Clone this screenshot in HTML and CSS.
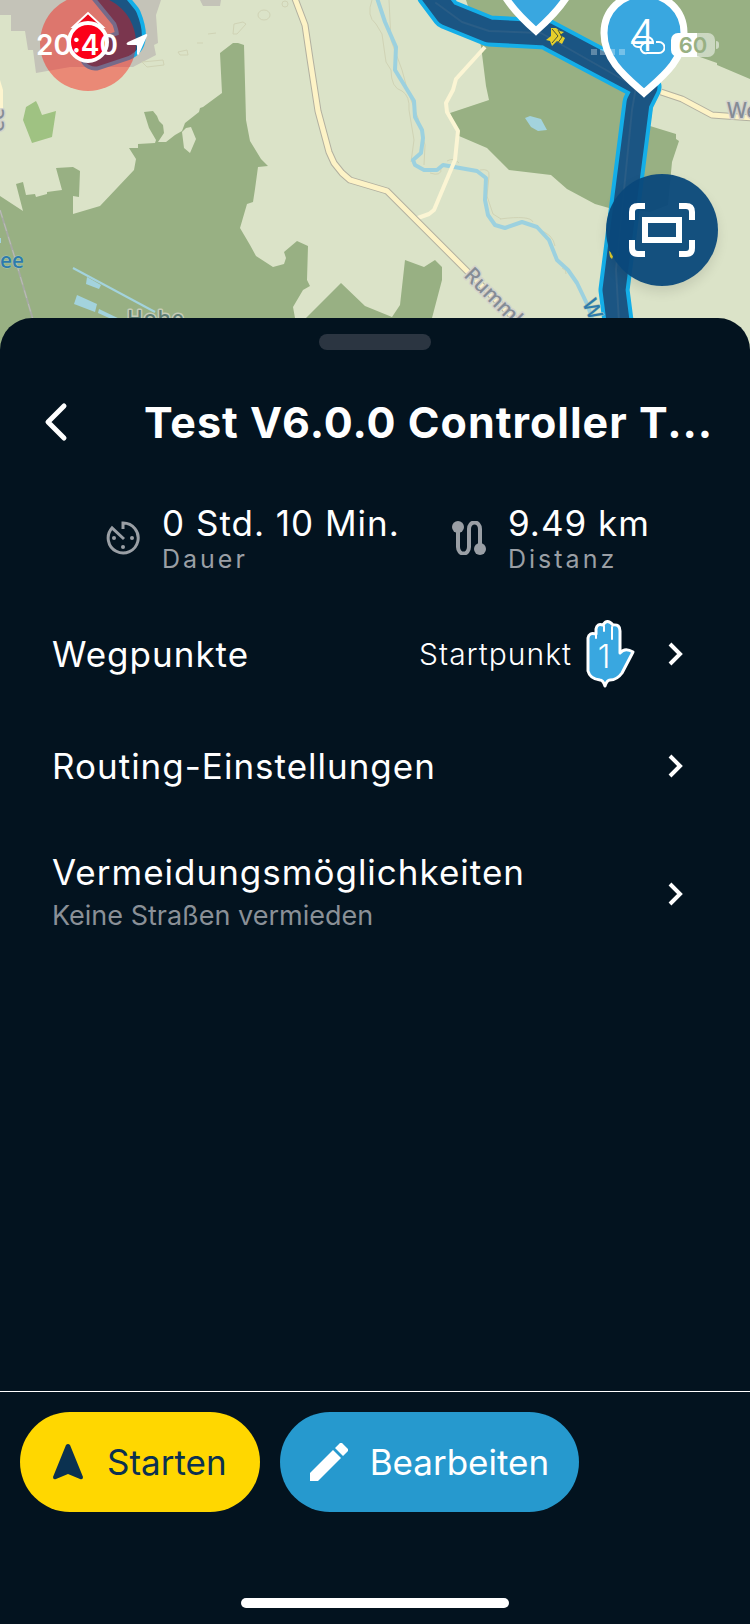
FILE: index.html
```html
<!DOCTYPE html>
<html lang="de">
<head>
    <meta charset="UTF-8">
    <meta name="viewport" content="width=device-width, initial-scale=1.0">
    <title>Test V6.0.0 Controller T...</title>
    <link rel="stylesheet" href="styles.css">
</head>
<body>

    <div class="map">
        <svg class="map-canvas" viewBox="0 0 750 352" preserveAspectRatio="xMidYMin slice" aria-hidden="true">
            <!-- Ort und Wald -->
            <path fill="#c4c3b8" d="M0 0V15H11V31H25L28 50H33L36 73L70 67H133L156 55L154 45L158 43L156 15L161 0ZM200 0L203 6H220L221 0Z"/>
            <path fill="#9fc282" d="M26 107L36 101L38 105L42 115L56 111L52 137L32 143L23 120Z"/>
            <path fill="#98b083" fill-rule="evenodd" d="M0 196L23 211L16 184L23 182L26 195L35 194L36 197L47 194V192L62 190L56 168L73 167L80 171L79 197L73 196V214L100 206L134 170L136 159L129 148H138V144L155 143L156 140L149 128L144 112L153 111L157 116L159 121L163 125L164 133L158 142H166L175 135L182 131L185 123L199 112L200 108L203 107L222 93L220 53L233 43H238L244 45L246 120L250 141L261 159L268 166L258 167L255 189L253 202L247 204L240 228L250 245L256 256L273 267L284 264L286 258L284 252L297 241L308 246L307 280L310 286L303 290L293 307L295 318H306L341 283L365 306L392 317L400 305L405 260L424 267L435 260L442 267V280L432 318V352H0ZM186 128L191 127L196 139L190 153L184 148L182 132Z"/>
            <path fill="#98b083" d="M466 0H750V79L717 65V63L700 57L662 42L650 126L676 134V139L679 141L672 162L668 205L650 212L609 208L595 204L567 189L551 175L509 170L500 161L487 148L459 136L450 113L489 100L486 86L481 46Z"/>
            <!-- Höhenlinien -->
            <g fill="none" stroke="#d0d3b5" stroke-width="1">
                <path d="M372 0Q366 16 376 24L382 34L386 62L391 70Q391 88 402 91Q410 96 409 110L414 140L411 162M389 0L391 40L402 70L408 92L418 118L425 145L424 165M430 173Q442 177 441 168M447 161Q454 157 459 163M480 170Q490 168 489 176L487 196L493 214L501 219M500 219Q530 215 533 222M539 230Q553 234 555 246M562 268Q567 270 566 274"/>
                <ellipse cx="264" cy="15" rx="6" ry="5"/><circle cx="285" cy="4" r="3"/>
                <path d="M142 62L163 60L164 65L147 67ZM178 52L187 50L188 55L180 55ZM197 43L203 43M208 34L216 33M234 24L243 22L246 24L237 34L233 34Z"/>
            </g>
            <!-- Gewässer -->
            <path fill="#a3d3dd" d="M87 277L101 285L99 289L86 284ZM77 295L97 304L95 312L74 304ZM99 309L124 321L118 322L98 313ZM525 118L530 116L541 119L547 130L538 131L531 127ZM0 238L1 238V243H0Z"/>
            <path fill="none" stroke="#a3d3dd" stroke-width="2" d="M73 268L155 312"/>
            <path fill="none" stroke="#9cd1df" stroke-width="4" stroke-linejoin="round" d="M377 -2L385 22L396 47L395 70L414 101L415 117L422 130L423 138L421 153L413 160L415 165L424 170H437L443 165L477 171L486 178L485 200L488 215L495 225L505 228L522 222L537 227L549 240L557 260L568 270L577 283L588 306L593 322"/>
            <!-- Straßen und Bahn -->
            <path fill="none" stroke="#a6aaa3" stroke-width="2" d="M0 210L14 255L36 330"/>
            <path fill="none" stroke="#bbbeb5" stroke-width="1" stroke-dasharray="8 6" d="M0 210L14 255L36 330"/>
            <path fill="#fdf5cf" d="M0 80L3 90V108L0 111Z"/>
            <path fill="none" stroke="#fbf5d4" stroke-width="4" stroke-linejoin="round" d="M485 47L456 79L453 90L446 103L447 112L458 131L455 160L434 210L429 214L415 219"/>
            <g fill="none" stroke-linejoin="round">
                <path stroke="#b2b0a0" stroke-width="7" d="M294 -4L305 25L310 59L318 111L329 152L334 163L342 173L350 180L387 191L464 268L520 324M661 92L682 99L712 115L752 118"/>
                <path stroke="#fdf3c6" stroke-width="5" d="M294 -4L305 25L310 59L318 111L329 152L334 163L342 173L350 180L387 191L464 268L520 324M661 92L682 99L712 115L752 118"/>
            </g>
            <!-- Route -->
            <g fill="none" stroke-linejoin="round" stroke-linecap="round">
                <path stroke="#14aee8" stroke-width="31" d="M432 -6L447 14L489 31L546 34L646 87L638 103L614 290L622 352M104 -10L126 17Q135 39 125 45L95 55"/>
                <path stroke="#1b5583" stroke-width="23" d="M432 -6L447 14L489 31L546 34L646 87L638 103L614 290L622 352M104 -10L126 17Q135 39 125 45L95 55"/>
                <path stroke="#2a5d86" stroke-width="2" d="M436 3L462 22L489 31L541 33L636 87L632 110L616 270L620 340"/>
            </g>
            <path fill="#e5cf2b" d="M551 28L556 28L560 31L564 32L560 35L565 38L562 44L557 41L552 46L550 41L546 40L551 36ZM609 251L614 254L612 259L610 257Z"/>
            <path fill="none" stroke="#4b5636" stroke-width="1" d="M552 29L558 36L552 43M558 30L562 37L557 44"/>
            <!-- Beschriftungen -->
            <g class="map-labels">
                <text class="label-road" transform="translate(463 276) rotate(45)">Rummler</text>
                <text class="label-road" x="727" y="118">We</text>
                <text class="label-road" transform="translate(4 132) rotate(-90)">ee</text>
                <text class="label-water" x="0" y="268">ee</text>
                <text class="label-water" transform="translate(582 303) rotate(66)">W</text>
                <text class="label-place" x="127" y="326">Hohe</text>
            </g>
            <!-- Position -->
            <circle cx="88" cy="43" r="48" fill="#ff0c05" fill-opacity=".42"/>
            <path fill="#eb0a1c" stroke="#fff" stroke-width="2" d="M73 27L88 13L103 27Z"/>
            <circle cx="88" cy="42" r="19" fill="#fb0019" stroke="#fff" stroke-width="4"/>
            <!-- Wegpunkte -->
            <g fill="#39a7e0" stroke="#fff" stroke-width="7">
                <path d="M536 31C518 15 496 -8 496 -29H576C576 -8 554 15 536 31Z"/>
                <path d="M644 93C626 77 604 60 604 33C604 10 622 -6 644 -6S684 10 684 33C684 60 662 77 644 93Z"/>
            </g>
            <text class="pin-number" x="642" y="51">4</text>
        </svg>

        <div class="status-bar">
            <div class="status-left">
                <span>20:40</span>
                <svg width="22" height="22" viewBox="0 0 22 22" aria-hidden="true">
                    <path fill="#fff" d="M20 0Q22 0 21 2L13 20Q12 22 11 20V12Q11 11 10 11H2Q-1 10 2 8Z"/>
                </svg>
            </div>
            <div class="status-right">
                <svg width="34" height="20" viewBox="0 0 34 20" aria-hidden="true">
                    <path fill="#fff" fill-opacity=".3" d="M0 14H6V20H0ZM9 14H15V20H9ZM18 14H24V20H18ZM28 14H34V20H28Z"/>
                </svg>
                <svg width="34" height="20" viewBox="0 0 34 20" aria-hidden="true">
                    <g fill="none" stroke="#fff" stroke-width="2">
                        <path d="M9 12H7A5 5 0 0 1 7 2H17A6 6 0 0 1 22 9"/>
                        <path d="M25 7H28A5 5 0 0 1 28 18H16A5 5 0 0 1 12 9Q14 7 17 7"/>
                    </g>
                </svg>
                <span class="battery">60</span>
            </div>
        </div>

        <button class="fit-button" type="button" aria-label="Route einpassen">
            <svg width="66" height="54" viewBox="0 0 66 54" aria-hidden="true">
                <path fill="none" stroke="#fff" stroke-width="6" d="M3 17V9Q3 3 9 3H16M50 3H57Q63 3 63 9V17M63 37V45Q63 51 57 51H50M16 51H9Q3 51 3 45V37"/>
                <rect x="16" y="17" width="34" height="20" fill="none" stroke="#fff" stroke-width="6"/>
            </svg>
        </button>
    </div>

    <main class="sheet">
        <div class="handle"></div>

        <header class="sheet-header">
            <button class="back" type="button" aria-label="Zurück">
                <svg width="24" height="40" viewBox="0 0 24 40" aria-hidden="true">
                    <path fill="none" stroke="#fff" stroke-width="5" stroke-linecap="round" stroke-linejoin="round" d="M20 4L4 20L20 36"/>
                </svg>
            </button>
            <h1>Test V6.0.0 Controller T...</h1>
        </header>

        <div class="stats">
            <div class="stat">
                <svg width="34" height="34" viewBox="0 0 34 34" aria-hidden="true">
                    <path fill="none" stroke="#9a9fa5" stroke-width="3" stroke-linejoin="miter" d="M17 8V2A15 15 0 1 1 6 7L18 18"/>
                    <g fill="#9a9fa5"><circle cx="8" cy="17" r="2"/><circle cx="26" cy="17" r="2"/><circle cx="17" cy="26" r="2"/></g>
                </svg>
                <div>
                    <p class="stat-value">0 Std. 10 Min.</p>
                    <p class="stat-label">Dauer</p>
                </div>
            </div>
            <div class="stat">
                <svg width="34" height="34" viewBox="0 0 34 34" aria-hidden="true">
                    <path fill="none" stroke="#9a9fa5" stroke-width="4" d="M6 6V26A5 6 0 0 0 17 26V8A5 6 0 0 1 28 8V26"/>
                    <circle cx="6" cy="6" r="6" fill="#9a9fa5"/>
                    <circle cx="28" cy="28" r="6" fill="#9a9fa5"/>
                </svg>
                <div>
                    <p class="stat-value">9.49 km</p>
                    <p class="stat-label">Distanz</p>
                </div>
            </div>
        </div>

        <nav class="options">
            <a class="option" href="#">
                <span class="option-title">Wegpunkte</span>
                <span class="option-value">Startpunkt</span>
                <svg class="hand" width="50" height="70" viewBox="0 0 50 70" aria-hidden="true">
                    <path fill="#39a7e0" stroke="#fff" stroke-width="3" stroke-linejoin="round" d="M2 52V19Q3 13 10 15V10Q11 4 17 6Q21 -1 27 6Q34 5 34 12V34Q39 28 47 33L36 54Q31 61 24 61Q21 61 19 67Q17 61 14 61Q4 60 2 52Z"/>
                    <path fill="none" stroke="#fff" stroke-width="2" stroke-linecap="round" d="M10 14V19M18 7V12M26 8V20"/>
                    <text class="hand-number" x="18" y="49">1</text>
                </svg>
                <svg class="chevron" width="16" height="24" viewBox="0 0 16 24" aria-hidden="true">
                    <path fill="none" stroke="#fff" stroke-width="4" d="M2 2L12 12L2 22"/>
                </svg>
            </a>
            <a class="option" href="#">
                <span class="option-title">Routing-Einstellungen</span>
                <svg class="chevron" width="16" height="24" viewBox="0 0 16 24" aria-hidden="true">
                    <path fill="none" stroke="#fff" stroke-width="4" d="M2 2L12 12L2 22"/>
                </svg>
            </a>
            <a class="option option-tall" href="#">
                <span class="option-title">Vermeidungsmöglichkeiten
                    <small>Keine Straßen vermieden</small>
                </span>
                <svg class="chevron" width="16" height="24" viewBox="0 0 16 24" aria-hidden="true">
                    <path fill="none" stroke="#fff" stroke-width="4" d="M2 2L12 12L2 22"/>
                </svg>
            </a>
        </nav>

        <footer class="actions">
            <button class="action start" type="button">
                <svg width="30" height="36" viewBox="0 0 30 36" aria-hidden="true">
                    <path fill="#0b3150" d="M13 1Q15 -1 17 1L30 33Q30 36 27 35L15 30L3 35Q0 36 0 33Z"/>
                </svg>
                Starten
            </button>
            <button class="action edit" type="button">
                <svg width="38" height="38" viewBox="0 0 38 38" aria-hidden="true">
                    <path fill="#fff" d="M0 30L23 7L31 15L8 38H0ZM25 5L30 0Q31 -1 32 0L38 6Q39 7 38 8L33 13Z"/>
                </svg>
                Bearbeiten
            </button>
        </footer>
        <div class="home-indicator"></div>
    </main>

</body>
</html>
```
FILE: styles.css
```css
* {
    box-sizing: border-box;
}

body {
    font-family: 'Inter', 'Liberation Sans', sans-serif;
    margin: 0;
    min-height: 100vh;
    display: flex;
    flex-direction: column;
    background-color: #03131f;
    color: #ffffff;
}

h1, p {
    margin: 0;
}

button {
    font-family: inherit;
    color: inherit;
    border: none;
    padding: 0;
    cursor: pointer;
}

svg {
    display: block;
    flex: none;
}

/* Karte */
.map {
    position: relative;
    background-color: #dbe3c8;
}

.map-canvas {
    width: 100%;
    height: 352px;
}

.map-labels {
    font-family: 'Noto Sans', sans-serif;
    font-size: 21px;
    font-weight: 500;
    paint-order: stroke;
    stroke-width: 3px;
    stroke-linejoin: round;
}

.label-road {
    fill: #858c96;
    stroke: #d3d3cc;
}

.label-water {
    fill: #2d7bac;
    stroke: #a9c7b0;
    stroke-width: 1px;
}

.label-place {
    fill: #5f7f74;
    stroke: #c5ccb8;
    letter-spacing: 1px;
}

.pin-number {
    fill: #ffffff;
    font-size: 44px;
    font-weight: 300;
    text-anchor: middle;
}

.status-bar {
    position: absolute;
    top: 0;
    left: 0;
    right: 0;
    height: 90px;
    padding: 0 30px 0 36px;
    display: flex;
    justify-content: space-between;
    align-items: center;
}

.status-left,
.status-right {
    display: flex;
    align-items: center;
    gap: 8px;
}

.status-right {
    gap: 6px;
}

.status-left {
    font-size: 28px;
    font-weight: 600;
}

.battery {
    position: relative;
    width: 44px;
    height: 24px;
    margin-right: 5px;
    border-radius: 7px;
    background: linear-gradient(90deg, #ffffff 60%, rgba(255, 255, 255, 0.5) 60%);
    color: #98b083;
    font-size: 22px;
    font-weight: 600;
    line-height: 24px;
    text-align: center;
}

.battery::after {
    content: '';
    position: absolute;
    right: -4px;
    top: 8px;
    width: 3px;
    height: 8px;
    border-radius: 0 3px 3px 0;
    background-color: rgba(255, 255, 255, 0.5);
}

.fit-button {
    position: absolute;
    top: 174px;
    right: 32px;
    width: 112px;
    height: 112px;
    border-radius: 50%;
    background-color: rgba(10, 72, 122, 0.95);
    box-shadow: 0 6px 12px rgba(0, 0, 0, 0.1);
    display: flex;
    align-items: center;
    justify-content: center;
}

/* Routendetails */
.sheet {
    position: relative;
    flex: 1;
    margin-top: -34px;
    padding-top: 16px;
    border-radius: 32px 32px 0 0;
    background-color: #03131f;
    display: flex;
    flex-direction: column;
}

.handle {
    width: 112px;
    height: 16px;
    margin: 0 auto;
    border-radius: 8px;
    background-color: #2b3541;
}

.sheet-header {
    display: flex;
    align-items: center;
    padding: 0 30px 0 44px;
    height: 144px;
}

.back {
    width: 100px;
    background: none;
}

h1 {
    font-size: 43px;
    font-weight: 700;
    letter-spacing: 1px;
    line-height: 64px;
    white-space: nowrap;
}

.stats {
    display: grid;
    grid-template-columns: 1fr 1fr;
    column-gap: 48px;
    padding: 8px 0 0 106px;
    height: 104px;
}

.stat {
    display: flex;
    align-items: center;
    align-self: start;
    gap: 22px;
    white-space: nowrap;
}

.stat-value {
    font-size: 35px;
    letter-spacing: 1px;
    line-height: 42px;
}

.stat-label {
    font-size: 25px;
    letter-spacing: 3px;
    line-height: 30px;
    color: #9a9fa5;
}

.option {
    display: flex;
    align-items: center;
    min-height: 112px;
    padding: 0 66px 0 52px;
    color: inherit;
    text-decoration: none;
}

.option-tall {
    min-height: 144px;
}

.option-title {
    flex: 1;
    font-size: 35px;
    letter-spacing: 1px;
    line-height: 44px;
}

.option-title small {
    display: block;
    font-size: 27px;
    letter-spacing: 0;
    color: #8a9097;
}

.option-value {
    font-size: 30px;
    font-weight: 300;
    letter-spacing: 1px;
}

.hand {
    margin: 0 32px 0 14px;
}

.hand-number {
    fill: #ffffff;
    font-size: 32px;
    font-weight: 300;
    text-anchor: middle;
}

.actions {
    margin-top: auto;
    display: flex;
    gap: 20px;
    padding: 20px;
    border-top: 1px solid #ffffff;
}

.action {
    display: flex;
    align-items: center;
    height: 100px;
    border-radius: 50px;
    font-size: 35px;
}

.start {
    gap: 24px;
    padding: 0 33px;
    background-color: #ffd700;
    color: #0b3150;
}

.edit {
    gap: 22px;
    padding: 0 30px;
    background-color: #2699ce;
}

.home-indicator {
    width: 268px;
    height: 10px;
    margin: 66px auto 16px;
    border-radius: 5px;
    background-color: #ffffff;
}
```
